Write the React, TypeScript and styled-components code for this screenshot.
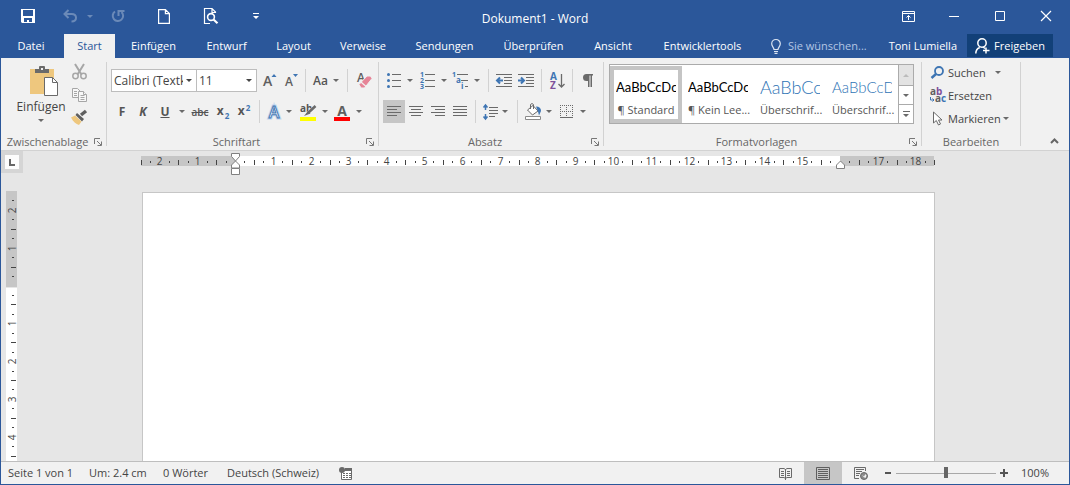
import React from "react";
import styled, { createGlobalStyle, css } from "styled-components";

const BLUE = "#2b579a";
const ACCENT = "#3e75b3";
const INK = "#6a6a6a";
const UI_FONT = `"Open Sans", "Noto Sans", sans-serif`;

const GlobalStyle = createGlobalStyle`
  * { box-sizing: border-box; }
  body { margin: 0; }
  button, input, select {
    font: inherit;
    color: inherit;
    margin: 0;
    padding: 0;
    border: 0;
    background: none;
  }
  svg { display: block; flex: none; overflow: visible; }
`;

/* ---------- frame ---------- */

const Window = styled.div`
  display: flex;
  flex-direction: column;
  height: 100vh;
  border: 1px solid ${BLUE};
  border-top: 0;
  background: #e6e6e6;
  font-family: ${UI_FONT};
  font-size: 11px;
  line-height: 16px;
  color: #444;
  overflow: hidden;
`;

const TitleBar = styled.header`
  display: grid;
  grid-template-columns: 1fr auto 1fr;
  height: 34px;
  background: ${BLUE};
  color: #fff;
`;

const ButtonStrip = styled.div<{ $end?: boolean }>`
  display: flex;
  height: 32px;
  justify-content: ${(p) => (p.$end ? "flex-end" : "flex-start")};
`;

const Title = styled.h1`
  margin: 0;
  padding-top: 11px;
  font-size: 12px;
  line-height: 16px;
  font-weight: 400;
`;

const BarButton = styled.button<{ $w: number }>`
  display: flex;
  align-items: center;
  justify-content: center;
  flex: none;
  width: ${(p) => p.$w}px;
  &:disabled { opacity: 0.3; color: #fff; }
`;

const TabRow = styled.nav`
  display: flex;
  height: 24px;
  background: ${BLUE};
  color: #fff;
  font-size: 12px;
`;

const Tab = styled.button<{ $w: number; $active?: boolean }>`
  flex: none;
  width: ${(p) => p.$w}px;
  font-size: 11px;
  white-space: nowrap;
  ${(p) => p.$active && css`background: #f1f1f1; color: ${BLUE};`}
`;

const TellMe = styled.label`
  display: flex;
  align-items: center;
  gap: 7px;
  padding-left: 14px;
  font-size: 11px;
`;

const TellMeInput = styled.input`
  width: 88px;
  &::placeholder { color: #b4c6e4; opacity: 1; }
`;

const Account = styled.div`
  display: flex;
  margin-left: auto;
  padding-right: 16px;
  gap: 10px;
  font-size: 11px;
  white-space: nowrap;
`;

const ShareButton = styled.button`
  display: flex;
  align-items: center;
  justify-content: center;
  gap: 4px;
  width: 86px;
  height: 23px;
  background: #124078;
`;

/* ---------- ribbon ---------- */

const Ribbon = styled.section`
  display: flex;
  height: 93px;
  background: #f1f1f1;
  border-bottom: 1px solid #d2d2d2;
`;

const Group = styled.div<{ $w: number }>`
  display: grid;
  grid-template-rows: 76px 16px;
  flex: none;
  width: ${(p) => p.$w}px;
`;

const Divider = styled.div`
  flex: none;
  width: 1px;
  margin: 4px 0;
  background: #d2d2d2;
`;

const GroupFooter = styled.div`
  display: flex;
  align-items: center;
  color: #666;
  white-space: nowrap;
`;

const GroupName = styled.span`
  flex: 1;
  text-align: center;
`;

const Launcher = styled.button`
  display: flex;
  width: 12px;
`;

const Rows = styled.div`
  display: flex;
  flex-direction: column;
  gap: 8px;
  padding: 11px 0 0 4px;
`;

const Row = styled.div`
  display: flex;
  height: 23px;
`;

const ToolButton = styled.button<{ $w?: number; $on?: boolean }>`
  display: flex;
  align-items: center;
  justify-content: center;
  flex: none;
  width: ${(p) => p.$w ?? 22}px;
  background: ${(p) => (p.$on ? "#c6c6c6" : "none")};
`;

const DropButton = styled.button<{ $w: number }>`
  display: flex;
  align-items: center;
  flex: none;
  width: ${(p) => p.$w}px;
  color: ${INK};
  &:disabled { color: #fff; opacity: 0.3; }
`;

const Slot = styled.span<{ $w: number }>`
  display: flex;
  justify-content: center;
  width: ${(p) => p.$w}px;
`;

const CaretSlot = styled.span`
  display: flex;
  justify-content: center;
  width: 10px;
`;

const Sep = styled.span`
  flex: none;
  width: 1px;
  margin: 0 4px;
  background: #d2d2d2;
`;

const Combo = styled.label<{ $w: number }>`
  display: flex;
  align-items: center;
  flex: none;
  width: ${(p) => p.$w}px;
  padding: 0 4px 0 2px;
  background: #fff;
  border: 1px solid #bdbdbd;
  & + & { margin-left: -1px; }
`;

const ComboSelect = styled.select`
  flex: 1;
  min-width: 0;
  margin-right: 3px;
  height: 21px;
  font-size: 12px;
  appearance: none;
  text-overflow: clip;
  overflow: hidden;
`;

const Glyph = styled.span<{ $italic?: boolean; $line?: string; $size?: number; $heavy?: boolean }>`
  font-size: ${(p) => p.$size ?? 12}px;
  font-weight: ${(p) => (p.$heavy ? 700 : 600)};
  font-style: ${(p) => (p.$italic ? "italic" : "normal")};
  text-decoration: ${(p) => p.$line ?? "none"};
  color: #555;
  line-height: 16px;
`;

const Script = styled.span<{ $sup?: boolean }>`
  align-self: ${(p) => (p.$sup ? "flex-start" : "flex-end")};
  font-size: 8px;
  line-height: 10px;
  font-weight: 700;
  color: ${ACCENT};
`;

const ScriptPair = styled.span`
  display: flex;
  gap: 1px;
  height: 18px;
`;

const Clipboard = styled.div`
  display: flex;
  padding: 6px 0 0 15px;
`;

const PasteButton = styled.button`
  display: flex;
  flex-direction: column;
  align-items: center;
  gap: 4px;
  width: 50px;
  padding-top: 2px;
  color: ${INK};
  white-space: nowrap;
`;

const PasteLabel = styled.span`
  font-size: 12px;
  line-height: 16px;
  color: #444;
`;

const SmallTools = styled.div`
  display: flex;
  flex-direction: column;
  width: 26px;
`;

const SmallTool = styled.button`
  display: flex;
  justify-content: center;
  height: 23px;
`;

/* ---------- styles gallery ---------- */

const StylesArea = styled.div`
  padding: 6px 7px 6px 5px;
`;

const Gallery = styled.div`
  display: flex;
  height: 60px;
  background: #fff;
  border: 1px solid #ababab;
`;

const StyleCard = styled.button<{ $on?: boolean }>`
  display: flex;
  flex-direction: column;
  gap: 4px;
  flex: none;
  width: 72px;
  margin: 1px 0 0;
  padding: 6px 2px 0;
  border: 4px solid ${(p) => (p.$on ? "#c5c5c5" : "transparent")};
  text-align: left;
  white-space: nowrap;
`;

const Sample = styled.span<{ $size: number; $heading?: boolean }>`
  width: 60px;
  overflow: hidden;
  font-family: Lato, "Open Sans", sans-serif;
  font-size: ${(p) => p.$size}px;
  font-weight: ${(p) => (p.$heading ? 300 : 400)};
  line-height: 22px;
  height: 22px;
  color: ${(p) => (p.$heading ? "#2e74b5" : "#000")};
`;

const StyleName = styled.span`
  width: 60px;
  text-align: center;
  color: #555;
`;

const GalleryNav = styled.div`
  display: grid;
  grid-template-rows: 20px 19px 19px;
  width: 15px;
  margin-left: auto;
  border-left: 1px solid #ababab;
  color: ${INK};
`;

const NavButton = styled.button`
  display: flex;
  align-items: center;
  justify-content: center;
  & + & { border-top: 1px solid #ababab; }
  &:disabled { background: #e3e3e3; color: #bbb; }
`;

const EditList = styled.div`
  display: flex;
  flex-direction: column;
  padding: 3px 0 0 7px;
`;

const EditButton = styled.button`
  display: flex;
  align-items: center;
  gap: 2px;
  height: 23px;
  color: ${INK};
  white-space: nowrap;
`;

const EditLabel = styled.span`
  color: #444;
  font-size: 11px;
`;

const Collapse = styled.button`
  display: flex;
  align-self: flex-end;
  justify-content: center;
  width: 30px;
  height: 12px;
  margin-left: auto;
`;

/* ---------- document ---------- */

const Workspace = styled.main`
  display: grid;
  grid-template-columns: 23px 1fr 16px;
  grid-template-rows: 40px 1fr;
  flex: 1;
  min-height: 0;
  overflow: hidden;
`;

const TabSelector = styled.button`
  display: flex;
  align-items: center;
  justify-content: center;
  width: 22px;
  height: 22px;
  border: 4px solid #d5d5d5;
  background: #fcfcfc;
`;

const HorizontalRuler = styled.div`
  display: flex;
  justify-content: center;
  padding-top: 2px;
  overflow: hidden;
`;

const VerticalRuler = styled.div`
  grid-column: 1;
  padding-left: 5px;
  overflow: hidden;
`;

const Page = styled.article`
  width: 793px;
  max-width: 100%;
  margin: 1px auto 0;
  background: #fff;
  border: 1px solid #c6c6c6;
  border-bottom: 0;
  outline: none;
`;

/* ---------- status bar ---------- */

const StatusBar = styled.footer`
  display: flex;
  align-items: center;
  height: 23px;
  padding: 0 20px 0 7px;
  background: #f1f1f1;
  border-top: 1px solid #bebebe;
  white-space: nowrap;
`;

const StatusItem = styled.span<{ $w: number }>`
  flex: none;
  width: ${(p) => p.$w}px;
`;

const ViewControls = styled.div`
  display: flex;
  align-items: center;
  height: 22px;
  margin-left: auto;
`;

const ViewButton = styled(ToolButton)`
  width: 38px;
  height: 22px;
`;

const ZoomStep = styled.button`
  display: flex;
  justify-content: center;
  width: 16px;
`;

const ZoomSlider = styled.input`
  appearance: none;
  width: 100px;
  height: 12px;
  &::-webkit-slider-runnable-track {
    height: 12px;
    background: linear-gradient(#a8a8a8, #a8a8a8) center / 100% 1px no-repeat;
  }
  &::-webkit-slider-thumb {
    appearance: none;
    width: 4px;
    height: 11px;
    background: #666;
  }
`;

const ZoomValue = styled.span`
  width: 37px;
  text-align: right;
`;

/* ---------- icons ---------- */

const Caret = ({ up }: { up?: boolean }) => (
  <svg width="6" height="3" viewBox="0 0 6 3" aria-hidden="true">
    <path d={up ? "M0 3h6L3 0z" : "M0 0h6L3 3z"} fill="currentColor" />
  </svg>
);

const SaveIcon = () => (
  <svg width="14" height="14" viewBox="0 0 14 14">
    <path fillRule="evenodd" fill="#fff" d="M0 0h14v14H1L0 13zM2 1v6h10V1zM3 9v4h3v-2h2v2h3V9z" />
  </svg>
);
const UndoIcon = () => (
  <svg width="14" height="14" viewBox="0 0 14 14" fill="none" stroke="#fff" strokeWidth="2">
    <path d="M5.500 1L1.500 5l4 4M2 5h6.500c6 0 6 7.500 0 7.500" />
  </svg>
);
const RedoIcon = () => (
  <svg width="14" height="14" viewBox="0 0 14 14" fill="none" stroke="#fff" strokeWidth="2">
    <path d="M4 2.500A5.200 5.200 0 1 0 10.500 3M7.500 7V2h6" />
  </svg>
);
const NewIcon = () => (
  <svg width="12" height="15" viewBox="0 0 12 15" fill="none" stroke="#fff" strokeWidth="1.200">
    <path d="M.6.6h6.800l4 4v9.800H.6zM7.400.6v4h4" />
  </svg>
);
const PreviewIcon = () => (
  <svg width="15" height="16" viewBox="0 0 15 16" fill="none" stroke="#fff">
    <path d="M6 15.500H.5V.5h7.500l3.500 3.500v1M8 .5v4h3.500" strokeWidth="1.200" />
    <circle cx="7" cy="9" r="3.400" strokeWidth="1.600" />
    <path d="M9.500 11.500l4 3.700" strokeWidth="2.200" />
  </svg>
);
const CustomizeIcon = () => (
  <svg width="6" height="6" viewBox="0 0 6 6" fill="#fff">
    <path d="M0 0h6v1H0zM0 3h6L3 6z" />
  </svg>
);
const RibbonOptionsIcon = () => (
  <svg width="13" height="11" viewBox="0 0 13 11" fill="none" stroke="#fff">
    <path d="M.5.500h12v10H.5zM.5 2.500h12M6.500 9V4.500M4.500 6.500l2-2 2 2" />
  </svg>
);
const MinimizeIcon = () => (
  <svg width="10" height="1" viewBox="0 0 10 1"><path d="M0 0h10v1H0z" fill="#fff" /></svg>
);
const MaximizeIcon = () => (
  <svg width="10" height="10" viewBox="0 0 10 10"><path d="M.5.500h9v9h-9z" fill="none" stroke="#fff" /></svg>
);
const CloseIcon = () => (
  <svg width="10" height="10" viewBox="0 0 10 10"><path d="M0 0l10 10M10 0L0 10" stroke="#fff" strokeWidth="1.200" /></svg>
);
const BulbIcon = () => (
  <svg width="10" height="15" viewBox="0 0 10 15" fill="none" stroke="#dbe4f2" strokeWidth="1.200">
    <path d="M3 10.500C3 8.500.7 7.500.7 4.800a4.300 4.300 0 0 1 8.600 0C9.300 7.500 7 8.500 7 10.500zM3 12.500h4M3.500 14.300h3" />
  </svg>
);
const ShareIcon = () => (
  <svg width="15" height="16" viewBox="0 0 15 16" fill="none" stroke="#fff" strokeWidth="1.500">
    <circle cx="7" cy="5" r="4.200" />
    <path d="M.8 15.500c0-3 1.500-5 4-6M8 9l2 1.500M11 9.500v6M8 12.500h6.500" />
  </svg>
);

const PasteIcon = () => (
  <svg width="34" height="29" viewBox="-6 0 34 29">
    <path d="M0 3h24v25H0z" fill="#eec77e" />
    <path d="M5 3h4V1q0-1 1-1h4q1 0 1 1v2h4v4H5z" fill="#6a6a6a" />
    <path d="M11 2h2v2h-2z" fill="#f1f1f1" />
    <path d="M14.500 11.500h8l5 5v13h-13z" fill="#fff" stroke="#6a6a6a" />
    <path d="M22.500 11.500v5h5" fill="none" stroke="#6a6a6a" />
  </svg>
);
const CutIcon = () => (
  <svg width="15" height="16" viewBox="0 0 15 16" fill="none" stroke="#a6a6a6">
    <path d="M3 0l6.500 10.500M12 0L5.500 10.500" strokeWidth="2" />
    <circle cx="3.500" cy="12" r="2.700" strokeWidth="1.500" />
    <circle cx="11.500" cy="12" r="2.700" strokeWidth="1.500" />
  </svg>
);
const CopyIcon = () => (
  <svg width="15" height="15" viewBox="0 -1 15 15" fill="#f7f7f7" stroke="#a6a6a6">
    <path d="M.5.500h5l3 3v6h-8z" />
    <path d="M2 3.500h3M2 5.500h3M2 7.500h3" />
    <path d="M6.500 3.500h5l3 3v7h-8z" />
    <path d="M11.500 3.500v3h3M8.500 7.500h4M8.500 9.500h4M8.500 11.500h4" />
  </svg>
);
const BrushIcon = () => (
  <svg width="16" height="15" viewBox="0 0 16 15">
    <path d="M15 1l-5 4" stroke="#5f5f5f" strokeWidth="3.500" />
    <path d="M6 3l7 6-2 2.500L4.500 5z" fill="#5f5f5f" />
    <path d="M4 5.500l6.500 6L8 15C5 14 2 11.500 0 7.500z" fill="#eec77e" />
  </svg>
);
const LauncherIcon = () => (
  <svg width="8" height="8" viewBox="0 0 8 8" fill="none" stroke="#777">
    <path d="M.5 6V.5H6M3 3l4 4M7.500 3.500v4h-4" />
  </svg>
);

const LetterIcon = styled.svg`
  font-family: ${UI_FONT};
`;

const GrowIcon = ({ shrink }: { shrink?: boolean }) => (
  <LetterIcon width="13" height="16" viewBox="0 0 13 16">
    <text x="0" y="13" fontSize={shrink ? 12 : 14} fontWeight="600" fill="#5f5f5f">A</text>
    <path d={shrink ? "M8 1h5l-2.500 3z" : "M8.500 4h5L11 1z"} fill={ACCENT} />
  </LetterIcon>
);
const EraserIcon = () => (
  <LetterIcon width="15" height="16" viewBox="0 0 15 16">
    <text x="0" y="9" fontSize="12" fontWeight="600" fill="#5f5f5f">A</text>
    <path d="M10 3h3.500l1.500 2.500-7.500 9.500H4L2 11.500z" fill="#e68497" stroke="#f1f1f1" />
    <path d="M4 9l5 4.500" stroke="#f1f1f1" strokeWidth="1.200" />
  </LetterIcon>
);
const EffectsIcon = () => (
  <LetterIcon width="14" height="18" viewBox="0 0 14 18">
    <text x="7" y="15" textAnchor="middle" fontSize="16" fontWeight="600" fill="#fff" stroke="#c3d7ef" strokeWidth="3" paintOrder="stroke">A</text>
    <text x="7" y="15" textAnchor="middle" fontSize="16" fontWeight="600" fill="#fff" stroke={ACCENT} strokeWidth="1">A</text>
  </LetterIcon>
);
const HighlightIcon = () => (
  <LetterIcon width="17" height="18" viewBox="0 0 17 18">
    <text x="0" y="9" fontSize="10" fontWeight="700" fill="#555">ab</text>
    <path d="M15 4L6.500 12" stroke="#f1f1f1" strokeWidth="4" />
    <path d="M15.500 3L8 10" stroke="#6a6a6a" strokeWidth="2.600" />
    <path d="M8 8l2.500 2.500L4 13z" fill="#6a6a6a" />
    <path d="M0 14h16v4H0z" fill="#ff0" />
  </LetterIcon>
);
const FontColorIcon = () => (
  <LetterIcon width="16" height="18" viewBox="0 0 16 18">
    <text x="8" y="13" textAnchor="middle" fontSize="14" fontWeight="700" fill="#5f5f5f">A</text>
    <path d="M0 14h16v4H0z" fill="#f00" />
  </LetterIcon>
);

const BulletsIcon = () => (
  <svg width="14" height="15" viewBox="0 0 14 15">
    <path d="M5 1.500h9M5 7.500h9M5 13.500h9" stroke={INK} />
    <g fill={ACCENT}><circle cx="1.500" cy="1.500" r="1.500" /><circle cx="1.500" cy="7.500" r="1.500" /><circle cx="1.500" cy="13.500" r="1.500" /></g>
  </svg>
);
const NumbersIcon = () => (
  <LetterIcon width="15" height="17" viewBox="0 0 15 17">
    <path d="M5 2.500h10M5 8.500h10M5 14.500h10" stroke={INK} />
    <g fill={ACCENT} fontSize="7" fontWeight="700"><text x="0" y="5">1</text><text x="0" y="11">2</text><text x="0" y="17">3</text></g>
  </LetterIcon>
);
const MultilevelIcon = () => (
  <LetterIcon width="17" height="17" viewBox="0 0 17 17">
    <path d="M5 2.500h11M9 8.500h7M13 14.500h3" stroke={INK} />
    <g fill={ACCENT} fontWeight="700"><text x="0" y="5" fontSize="7">1</text><text x="4" y="11" fontSize="8">a</text><text x="9" y="17" fontSize="8">i</text></g>
  </LetterIcon>
);
const IndentIcon = ({ out }: { out?: boolean }) => (
  <svg width="16" height="13" viewBox="0 0 16 13">
    <path d="M0 .5h16M8 3.500h8M8 6.500h8M8 9.500h8M0 12.500h16" stroke={INK} />
    <path d={out ? "M7 6.500H1.500M4 3.500l-3 3 3 3" : "M0 6.500h5.500M3 3.500l3 3-3 3"} fill="none" stroke={ACCENT} strokeWidth="2" />
  </svg>
);
const SortIcon = () => (
  <LetterIcon width="15" height="18" viewBox="0 0 15 18">
    <text x="0" y="8" fontSize="10" fontWeight="700" fill={ACCENT}>A</text>
    <text x="0" y="17" fontSize="10" fontWeight="700" fill="#7e519b">Z</text>
    <path d="M11.500 2v13M8.500 12l3 3 3-3" fill="none" stroke={INK} strokeWidth="1.300" />
  </LetterIcon>
);
const PilcrowIcon = () => (
  <svg width="10" height="13" viewBox="0 0 10 13" fill={INK}>
    <path d="M3.500 0H10v1.500H9V13H7.500V1.500H6.500V13H5V7H3.500a3.500 3.500 0 0 1 0-7z" />
  </svg>
);

const alignPaths = {
  left: "M0 .5h14M0 3.500h10M0 6.500h14M0 9.500h10",
  center: "M0 .5h14M2 3.500h10M0 6.500h14M2 9.500h10",
  right: "M0 .5h14M4 3.500h10M0 6.500h14M4 9.500h10",
  justify: "M0 .5h14M0 3.500h14M0 6.500h14M0 9.500h14",
};
const AlignIcon = ({ kind }: { kind: keyof typeof alignPaths }) => (
  <svg width="14" height="11" viewBox="0 0 14 11"><path d={alignPaths[kind]} stroke={INK} /></svg>
);
const SpacingIcon = () => (
  <svg width="15" height="16" viewBox="0 0 15 16" fill="none">
    <path d="M6 3.500h9M6 6.500h9M6 9.500h9M6 12.500h6" stroke={INK} />
    <path d="M2.500 1v5M2.500 10v5M.5 3.500l2-2.500 2 2.500M.5 12.500l2 2.500 2-2.500" stroke={ACCENT} strokeWidth="1.500" />
  </svg>
);
const ShadingIcon = () => (
  <svg width="17" height="17" viewBox="0 0 17 17">
    <path d="M8 2.500l5 5.500-5.500 4L2.500 7z" fill="#fff" stroke={INK} />
    <path d="M5.500 6V1.500q1.500-2 3 0V6" fill="none" stroke={INK} />
    <path d="M11 3.500q5 0 5 4.500l-2 4.500-1-4z" fill={ACCENT} />
    <path d="M.5 13.500h15v3H.5z" fill="#fff" stroke="#8a8a8a" />
  </svg>
);
const BordersIcon = () => (
  <svg width="13" height="13" viewBox="0 0 13 13" fill="none" stroke={INK}>
    <path d="M0 .5h13M0 6.500h13M.5 0v12M6.500 0v12M12.500 0v12" strokeDasharray="1 1" />
    <path d="M0 12.500h13" />
  </svg>
);

const SearchIcon = () => (
  <svg width="13" height="13" viewBox="0 0 13 13" fill="none" stroke={ACCENT}>
    <circle cx="8" cy="5" r="4" strokeWidth="1.800" />
    <path d="M5 8l-4.500 4" strokeWidth="2.500" />
  </svg>
);
const ReplaceIcon = () => (
  <LetterIcon width="16" height="17" viewBox="0 0 16 17" fontSize="10" fontWeight="700">
    <text x="0" y="8" fill="#5f5f5f">a<tspan fill="#7e519b">b</tspan></text>
    <text x="5" y="15" fill="#5f5f5f">a<tspan fill={ACCENT}>c</tspan></text>
    <path d="M.5 10v3h3M2.500 11.500l1.500 1.500-1.500 1.500" fill="none" stroke={ACCENT} />
  </LetterIcon>
);
const PointerIcon = () => (
  <svg width="10" height="15" viewBox="0 0 10 15">
    <path d="M.5 1v11l2.800-2.500L5.500 14l2-1-2-4H9z" fill="#fff" stroke={INK} />
  </svg>
);
const ChevronIcon = () => (
  <svg width="9" height="6" viewBox="0 0 9 6"><path d="M1 5l3.500-3.500L8 5" fill="none" stroke="#666" strokeWidth="2" /></svg>
);
const MoreIcon = () => (
  <svg width="7" height="6" viewBox="0 0 7 6" fill={INK}><path d="M0 0h7v1H0zM0 3h6L3 6z" /></svg>
);
const TabStopIcon = () => (
  <svg width="6" height="7" viewBox="0 0 6 7"><path d="M0 0h2v5h4v2H0z" fill="#666" /></svg>
);

const MacroIcon = () => (
  <svg width="13" height="13" viewBox="0 0 13 13">
    <path d="M2.500 3.500h10v9h-10z" fill="#fff" stroke={INK} />
    <path d="M6 1h7v3H6z" fill={INK} />
    <path d="M4 6.500h8M4 8.500h8M4 10.500h8" stroke={INK} strokeDasharray="2 1" />
    <circle cx="3" cy="3" r="3" fill={INK} />
  </svg>
);
const ReadIcon = () => (
  <svg width="13" height="13" viewBox="0 0 13 13" fill="none" stroke={INK}>
    <path d="M.5 1.500H5l1.500 1L8 1.500h4.500v9H8l-1.500 1-1.500-1H.5zM6.500 2v11M2 4.500h3M2 6.500h3M2 8.500h3M8 4.500h3M8 6.500h3M8 8.500h3" />
  </svg>
);
const PrintLayoutIcon = () => (
  <svg width="14" height="13" viewBox="0 0 14 13" fill="none" stroke="#5f5f5f">
    <path d="M.5.500h13v12H.5zM2 2.500h10M2 4.500h10M2 6.500h10M2 8.500h10M2 10.500h10" />
  </svg>
);
const WebLayoutIcon = () => (
  <svg width="14" height="13" viewBox="0 0 14 13" fill="none" stroke={INK}>
    <path d="M5 11.500H.5V.5h11V4M2 2.500h8M2 4.500h6M2 6.500h4M2 8.500h3" />
    <circle cx="10" cy="9" r="3.500" fill="#8a8a8a" />
    <path d="M8 8l2 1.500L11.500 7l1 1.500-1 2.500-2-1z" fill="#f1f1f1" stroke="none" />
  </svg>
);
const MinusIcon = () => (
  <svg width="6" height="2" viewBox="0 0 6 2"><path d="M0 0h6v2H0z" fill="#555" /></svg>
);
const PlusIcon = () => (
  <svg width="8" height="8" viewBox="0 0 8 8"><path d="M3 0h2v3h3v2H5v3H3V5H0V3h3z" fill="#555" /></svg>
);

/* ---------- rulers ---------- */

const CM = 37.8;

type Mark = { pos: number; kind: "number" | "half" | "quarter"; label: number };

function marks(origin: number, fromQuarter: number, toQuarter: number): Mark[] {
  const list: Mark[] = [];
  for (let q = fromQuarter; q <= toQuarter; q++) {
    if (q === 0) continue;
    const kind = q % 4 === 0 ? "number" : q % 2 === 0 ? "half" : "quarter";
    list.push({ pos: Math.floor(origin + (q * CM) / 4), kind, label: Math.abs(q / 4) });
  }
  return list;
}

const RulerSvg = styled.svg`
  font-family: ${UI_FONT};
  font-size: 10px;
  fill: #444;
`;

const TopScale = () => (
  <RulerSvg width="795" height="24" viewBox="0 0 795 24" role="img" aria-label="Horizontales Lineal">
    <path d="M0 3h95v10H0zM699 3h94v10h-94z" fill="#c6c6c6" />
    <path d="M95 3h604v10H95z" fill="#fff" />
    {marks(94.5, -10, 74).map((m) =>
      m.label === 16 ? null : m.kind === "number" ? (
        <text key={m.pos} x={m.pos + 0.5} y="12" textAnchor="middle">{m.label}</text>
      ) : (
        <rect key={m.pos} x={m.pos} y={m.kind === "half" ? 7 : 8} width="1" height={m.kind === "half" ? 5 : 2} />
      )
    )}
    <g fill="#fff" stroke="#808080">
      <path d="M90.500.500h8v3l-4 4.500-4-4.500z" />
      <path d="M94.500 8l4 4v3h-8v-3z" />
      <path d="M90.500 15.500h8v6h-8z" />
      <path d="M699.500 8l4 4v3.500h-8V12z" />
    </g>
  </RulerSvg>
);

const SideScale = () => (
  <RulerSvg width="12" height="1122" viewBox="0 0 12 1122" role="img" aria-label="Vertikales Lineal">
    <path d="M0 0h11v96H0z" fill="#c6c6c6" />
    <path d="M0 97h11v1025H0z" fill="#fff" />
    {marks(95, -9, 100).map((m) =>
      m.kind === "number" ? (
        <text key={m.pos} transform={`translate(10 ${m.pos + 0.5}) rotate(-90)`} textAnchor="middle">{m.label}</text>
      ) : (
        <rect key={m.pos} x={m.kind === "half" ? 5 : 6} y={m.pos} width={m.kind === "half" ? 5 : 2} height="1" />
      )
    )}
  </RulerSvg>
);

/* ---------- parts ---------- */

const tabs = [
  { name: "Einfügen", width: 77 },
  { name: "Entwurf", width: 69 },
  { name: "Layout", width: 65 },
  { name: "Verweise", width: 74 },
  { name: "Sendungen", width: 89 },
  { name: "Überprüfen", width: 89 },
  { name: "Ansicht", width: 70 },
  { name: "Entwicklertools", width: 109 },
];

const styleCards = [
  { sample: "AaBbCcDc", name: "¶ Standard", size: 13, on: true },
  { sample: "AaBbCcDc", name: "¶ Kein Lee...", size: 13 },
  { sample: "AaBbCc", name: "Überschrif...", size: 18, heading: true },
  { sample: "AaBbCcD", name: "Überschrif...", size: 15, heading: true },
];

function Drop(props: { label: string; slot: number; width: number; disabled?: boolean; children: React.ReactNode }) {
  return (
    <DropButton aria-label={props.label} $w={props.width} disabled={props.disabled}>
      <Slot $w={props.slot}>{props.children}</Slot>
      <CaretSlot><Caret /></CaretSlot>
    </DropButton>
  );
}

function Footer({ name, launcher }: { name: string; launcher?: boolean }) {
  return (
    <GroupFooter>
      <GroupName>{name}</GroupName>
      {launcher && <Launcher aria-label={`${name} – Optionen`}><LauncherIcon /></Launcher>}
    </GroupFooter>
  );
}

export default function App() {
  return (
    <Window>
      <GlobalStyle />
      <TitleBar>
        <ButtonStrip>
          <BarButton $w={54} aria-label="Speichern"><SaveIcon /></BarButton>
          <Drop label="Rückgängig" slot={30} width={40} disabled><UndoIcon /></Drop>
          <BarButton $w={46} aria-label="Wiederholen" disabled><RedoIcon /></BarButton>
          <BarButton $w={46} aria-label="Neu"><NewIcon /></BarButton>
          <BarButton $w={48} aria-label="Seitenansicht"><PreviewIcon /></BarButton>
          <BarButton $w={42} aria-label="Symbolleiste anpassen"><CustomizeIcon /></BarButton>
        </ButtonStrip>
        <Title>Dokument1 - Word</Title>
        <ButtonStrip $end>
          <BarButton $w={46} aria-label="Menüband-Anzeigeoptionen"><RibbonOptionsIcon /></BarButton>
          <BarButton $w={46} aria-label="Minimieren"><MinimizeIcon /></BarButton>
          <BarButton $w={46} aria-label="Maximieren"><MaximizeIcon /></BarButton>
          <BarButton $w={46} aria-label="Schliessen"><CloseIcon /></BarButton>
        </ButtonStrip>
      </TitleBar>

      <TabRow>
        <Tab $w={60}>Datei</Tab>
        <Tab as="span" $w={3} />
        <Tab $w={51} $active>Start</Tab>
        {tabs.map((t) => <Tab key={t.name} $w={t.width}>{t.name}</Tab>)}
        <TellMe>
          <BulbIcon />
          <TellMeInput aria-label="Was möchten Sie tun?" placeholder="Sie wünschen..." />
        </TellMe>
        <Account>
          <button>Toni Lumiella</button>
          <ShareButton><ShareIcon />Freigeben</ShareButton>
        </Account>
      </TabRow>

      <Ribbon>
        <Group $w={105}>
          <Clipboard>
            <PasteButton>
              <PasteIcon />
              <PasteLabel>Einfügen</PasteLabel>
              <Caret />
            </PasteButton>
            <SmallTools>
              <SmallTool aria-label="Ausschneiden" disabled><CutIcon /></SmallTool>
              <SmallTool aria-label="Kopieren" disabled><CopyIcon /></SmallTool>
              <SmallTool aria-label="Format übertragen"><BrushIcon /></SmallTool>
            </SmallTools>
          </Clipboard>
          <Footer name="Zwischenablage" launcher />
        </Group>
        <Divider />

        <Group $w={271}>
          <Rows>
            <Row>
              <Combo $w={86}>
                <ComboSelect aria-label="Schriftart"><option>Calibri (Textkörper)</option></ComboSelect>
                <Caret />
              </Combo>
              <Combo $w={61}>
                <ComboSelect aria-label="Schriftgrad"><option>11</option></ComboSelect>
                <Caret />
              </Combo>
              <ToolButton $w={24} aria-label="Schrift vergrössern"><GrowIcon /></ToolButton>
              <ToolButton $w={20} aria-label="Schrift verkleinern"><GrowIcon shrink /></ToolButton>
              <Sep />
              <Drop label="Gross-/Kleinschreibung" slot={21} width={33}><Glyph>Aa</Glyph></Drop>
              <Sep />
              <ToolButton $w={24} aria-label="Formatierung löschen"><EraserIcon /></ToolButton>
            </Row>
            <Row>
              <ToolButton aria-label="Fett"><Glyph $heavy>F</Glyph></ToolButton>
              <ToolButton $w={20} aria-label="Kursiv"><Glyph $heavy $italic>K</Glyph></ToolButton>
              <Drop label="Unterstrichen" slot={24} width={34}><Glyph $heavy $line="underline">U</Glyph></Drop>
              <ToolButton $w={26} aria-label="Durchgestrichen"><Glyph $size={10} $line="line-through">abc</Glyph></ToolButton>
              <ToolButton $w={20} aria-label="Tiefgestellt"><ScriptPair><Glyph $heavy>x</Glyph><Script>2</Script></ScriptPair></ToolButton>
              <ToolButton aria-label="Hochgestellt"><ScriptPair><Glyph $heavy>x</Glyph><Script $sup>2</Script></ScriptPair></ToolButton>
              <Sep />
              <Drop label="Texteffekte" slot={20} width={32}><EffectsIcon /></Drop>
              <Drop label="Texthervorhebungsfarbe" slot={24} width={34}><HighlightIcon /></Drop>
              <Drop label="Schriftfarbe" slot={24} width={34}><FontColorIcon /></Drop>
            </Row>
          </Rows>
          <Footer name="Schriftart" launcher />
        </Group>
        <Divider />

        <Group $w={224}>
          <Rows>
            <Row>
              <Drop label="Aufzählungszeichen" slot={22} width={32}><BulletsIcon /></Drop>
              <Drop label="Nummerierung" slot={24} width={34}><NumbersIcon /></Drop>
              <Drop label="Liste mit mehreren Ebenen" slot={23} width={35}><MultilevelIcon /></Drop>
              <Sep />
              <ToolButton aria-label="Einzug verkleinern"><IndentIcon out /></ToolButton>
              <ToolButton aria-label="Einzug vergrössern"><IndentIcon /></ToolButton>
              <Sep />
              <ToolButton aria-label="Sortieren"><SortIcon /></ToolButton>
              <Sep />
              <ToolButton aria-label="Alle anzeigen"><PilcrowIcon /></ToolButton>
            </Row>
            <Row>
              <ToolButton $on aria-label="Linksbündig"><AlignIcon kind="left" /></ToolButton>
              <ToolButton aria-label="Zentriert"><AlignIcon kind="center" /></ToolButton>
              <ToolButton aria-label="Rechtsbündig"><AlignIcon kind="right" /></ToolButton>
              <ToolButton aria-label="Blocksatz"><AlignIcon kind="justify" /></ToolButton>
              <Sep />
              <Drop label="Zeilenabstand" slot={20} width={33}><SpacingIcon /></Drop>
              <Sep />
              <Drop label="Schattierung" slot={22} width={32}><ShadingIcon /></Drop>
              <Drop label="Rahmen" slot={24} width={34}><BordersIcon /></Drop>
            </Row>
          </Rows>
          <Footer name="Absatz" launcher />
        </Group>
        <Divider />

        <Group $w={317}>
          <StylesArea>
            <Gallery>
              {styleCards.map((s, i) => (
                <StyleCard key={i} $on={s.on}>
                  <Sample $size={s.size} $heading={s.heading}>{s.sample}</Sample>
                  <StyleName>{s.name}</StyleName>
                </StyleCard>
              ))}
              <GalleryNav>
                <NavButton aria-label="Nach oben" disabled><Caret up /></NavButton>
                <NavButton aria-label="Nach unten"><Caret /></NavButton>
                <NavButton aria-label="Weitere"><MoreIcon /></NavButton>
              </GalleryNav>
            </Gallery>
          </StylesArea>
          <Footer name="Formatvorlagen" launcher />
        </Group>
        <Divider />

        <Group $w={98}>
          <EditList>
            <EditButton><Slot $w={17}><SearchIcon /></Slot><EditLabel>Suchen</EditLabel><Slot $w={20}><Caret /></Slot></EditButton>
            <EditButton><Slot $w={17}><ReplaceIcon /></Slot><EditLabel>Ersetzen</EditLabel></EditButton>
            <EditButton><Slot $w={17}><PointerIcon /></Slot><EditLabel>Markieren</EditLabel><Caret /></EditButton>
          </EditList>
          <Footer name="Bearbeiten" />
        </Group>
        <Divider />
        <Collapse aria-label="Menüband reduzieren"><ChevronIcon /></Collapse>
      </Ribbon>

      <Workspace>
        <TabSelector aria-label="Tabstopp"><TabStopIcon /></TabSelector>
        <HorizontalRuler><TopScale /></HorizontalRuler>
        <VerticalRuler><SideScale /></VerticalRuler>
        <Page contentEditable suppressContentEditableWarning aria-label="Dokument" />
      </Workspace>

      <StatusBar>
        <StatusItem $w={81}>Seite 1 von 1</StatusItem>
        <StatusItem $w={74}>Um: 2.4 cm</StatusItem>
        <StatusItem $w={64}>0 Wörter</StatusItem>
        <StatusItem $w={112}>Deutsch (Schweiz)</StatusItem>
        <MacroIcon />
        <ViewControls>
          <ViewButton aria-label="Lesemodus"><ReadIcon /></ViewButton>
          <ViewButton $on aria-label="Seitenlayout"><PrintLayoutIcon /></ViewButton>
          <ViewButton aria-label="Weblayout"><WebLayoutIcon /></ViewButton>
          <ZoomStep aria-label="Verkleinern"><MinusIcon /></ZoomStep>
          <ZoomSlider type="range" min={0} max={100} defaultValue={50} aria-label="Zoom" />
          <ZoomStep aria-label="Vergrössern"><PlusIcon /></ZoomStep>
          <ZoomValue>100%</ZoomValue>
        </ViewControls>
      </StatusBar>
    </Window>
  );
}
